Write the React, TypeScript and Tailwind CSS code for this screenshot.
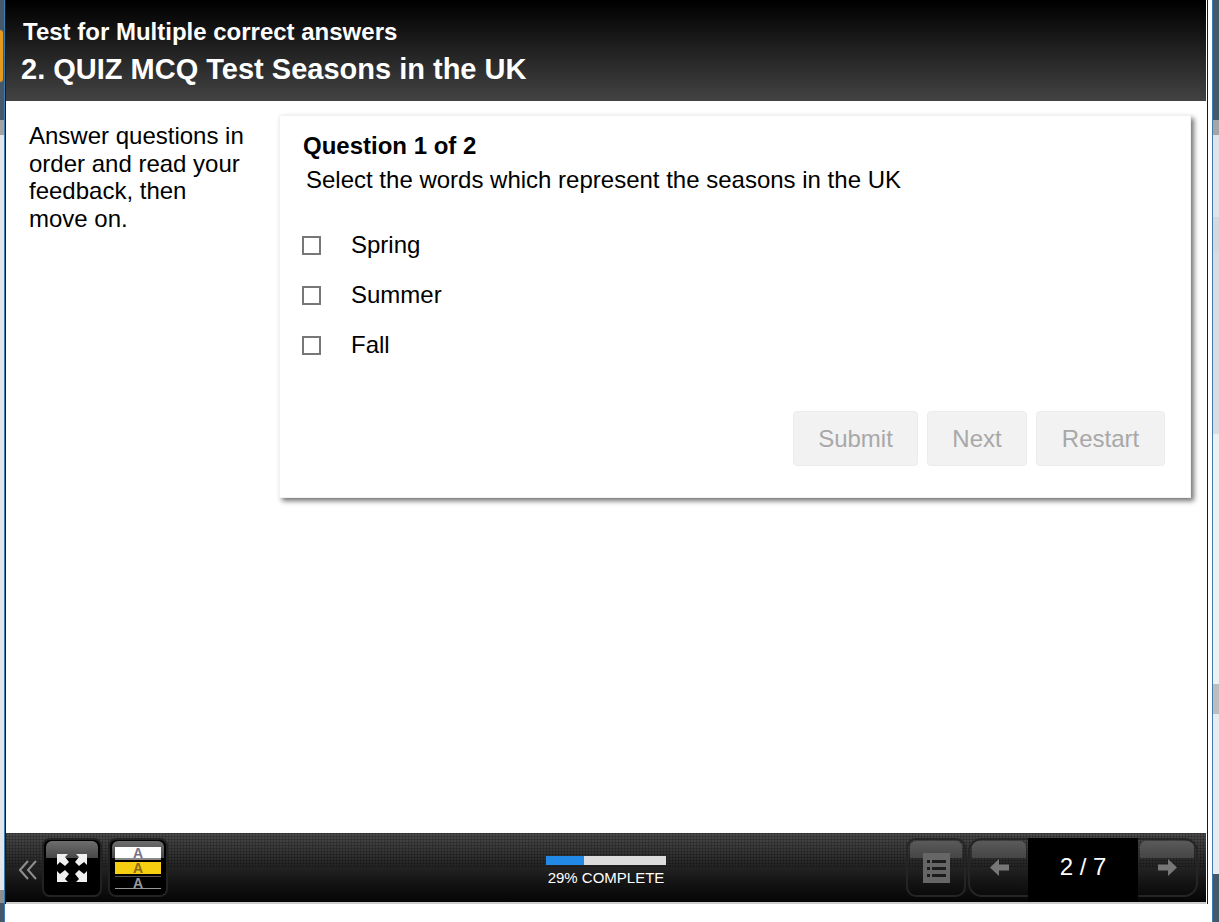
const options = ["Spring", "Summer", "Fall"];
const actions = [
  { label: "Submit", width: "w-[125px]" },
  { label: "Next", width: "w-[100px]" },
  { label: "Restart", width: "w-[129px]" },
];

function LeftStrip() {
  return (
    <div className="flex h-full w-[5px] shrink-0 flex-col border-r border-[#3d7cb0]">
      <div className="flex h-[120px] items-start bg-[#46596a]">
        <div className="mt-[30px] h-[52px] w-[3px] rounded-r-full bg-[#e39a1e]" />
      </div>
      <div className="h-[15px] bg-[#a3a3a3]" />
      <div className="h-[755px] bg-[#e2e5e9]" />
      <div className="h-[13px] bg-[#8f8f8f]" />
      <div className="flex-1 bg-[#44586a]" />
    </div>
  );
}

function RightStrip() {
  return (
    <div className="flex h-full w-[7px] shrink-0 flex-col border-l border-[#3d7cb0]">
      <div className="h-[120px] bg-[#44586a]" />
      <div className="h-[15px] bg-[#a5a5a5]" />
      <div className="h-[82px] bg-[#e0e3e8]" />
      <div className="h-[35px] bg-[#d5d8dc]" />
      <div className="h-[182px] bg-[#d9dce0]" />
      <div className="h-[250px] bg-[#eef0f2]" />
      <div className="h-[30px] bg-[#bdbdbd]" />
      <div className="h-[160px] bg-[#e9ebee]" />
      <div className="flex-1 bg-[#44586a]" />
    </div>
  );
}

function ToolButton({ className, dim, children }: { className: string; dim?: boolean; children: React.ReactNode }) {
  const shine = dim ? "bg-[linear-gradient(#5a5a5a,#454545)]" : "bg-[linear-gradient(#6e6e6e,#474747)]";
  return (
    <div className={`relative h-[59px] shrink-0 overflow-hidden border-2 ${className}`}>
      <div className={`absolute inset-x-[2px] top-[1px] h-[17px] rounded-t-[6px] ${shine}`} />
      <div className="relative flex h-full items-center justify-center">{children}</div>
    </div>
  );
}

function CollapseIcon() {
  return (
    <svg width="18" height="20" viewBox="0 0 18 20" fill="none" stroke="#8f8f8f" strokeWidth="2">
      <path d="M9 1 1 10l8 9" />
      <path d="M17 1 9 10l8 9" />
    </svg>
  );
}

function ExpandIcon() {
  return (
    <svg width="30" height="28" viewBox="0 0 30 28" fill="#f0f0f0">
      <path d="M0 0h11L8 3l4 5-4 4-5-4-3 3z" />
      <path d="M30 0H19l3 3-4 5 4 4 5-4 3 3z" />
      <path d="M0 28h11l-3-3 4-5-4-4-5 4-3-3z" />
      <path d="M30 28H19l3-3-4-5 4-4 5 4 3-3z" />
    </svg>
  );
}

function ContrastIcon() {
  const letter = "text-[14px] font-bold leading-[12px]";
  return (
    <div className="flex w-[46px] flex-col">
      <div className="flex h-[13px] justify-center border-b-2 border-[#888] bg-white">
        <span className={`${letter} text-[#77738a]`}>A</span>
      </div>
      <div className="mt-[2px] flex h-[12px] justify-center bg-[#f6cf10]">
        <span className={`${letter} text-[#8a6a18]`}>A</span>
      </div>
      <div className="mt-[2px] flex h-[13px] justify-center border-y border-t-[#555] border-b-[#999] bg-black">
        <span className={`${letter} text-[#9a9a9a]`}>A</span>
      </div>
    </div>
  );
}

function ListIcon() {
  return (
    <svg width="27" height="30" viewBox="0 0 27 30">
      <rect width="27" height="30" fill="#666" />
      <g fill="#1c1c1c">
        <rect x="4" y="7" width="3" height="3" />
        <rect x="9" y="7" width="14" height="3" />
        <rect x="4" y="14" width="3" height="3" />
        <rect x="9" y="14" width="14" height="3" />
        <rect x="4" y="21" width="3" height="3" />
        <rect x="9" y="21" width="14" height="3" />
      </g>
    </svg>
  );
}

function ArrowIcon({ flip }: { flip?: boolean }) {
  return (
    <svg width="19" height="17" viewBox="0 0 19 17" fill="#777" className={flip ? "rotate-180" : ""}>
      <path d="M9 0v5.5h10v6H9V17L0 8.5z" />
    </svg>
  );
}

function BottomBar() {
  return (
    <div className="relative flex h-[71px] shrink-0 border-b-2 border-[#ccc] bg-[linear-gradient(#4a4a4a,#262626_45%,#151515_70%,#050505)]">
      <div className="absolute inset-x-0 top-0 h-[34px] bg-[repeating-linear-gradient(90deg,rgba(0,0,0,0.2)_0_1px,transparent_1px_3px),repeating-linear-gradient(0deg,rgba(0,0,0,0.2)_0_1px,transparent_1px_3px)]" />
      <div className="relative flex flex-1 items-start pr-[8px] pt-[5px]">
        <div className="ml-[13px] mr-[5px] mt-[22px] w-[18px]">
          <CollapseIcon />
        </div>
        <ToolButton className="w-[60px] rounded-[8px] border-[#222] bg-black">
          <ExpandIcon />
        </ToolButton>
        <ToolButton className="ml-[6px] w-[60px] rounded-[8px] border-[#222] bg-black">
          <ContrastIcon />
        </ToolButton>
      </div>
      <div className="relative flex w-[120px] shrink-0 flex-col items-center pt-[23px]">
        <div className="flex h-[9px] w-full bg-[#dcdcdc]">
          <div className="h-full w-[38px] bg-[#2289e6]" />
        </div>
        <span className="mt-[3px] whitespace-nowrap text-[15px] leading-[20px] text-white">29% COMPLETE</span>
      </div>
      <div className="relative flex flex-1 items-start justify-end pr-[8px] pt-[5px]">
        <ToolButton dim className="mr-[2px] w-[60px] rounded-[10px] border-[#252525]">
          <ListIcon />
        </ToolButton>
        <ToolButton dim className="w-[60px] rounded-l-[14px] border-r-0 border-[#252525]">
          <ArrowIcon />
        </ToolButton>
        <div className="flex h-[64px] w-[110px] shrink-0 items-center justify-center bg-black pb-[6px] text-[24px] text-white">
          2 / 7
        </div>
        <ToolButton dim className="w-[60px] rounded-r-[14px] border-l-0 border-[#252525]">
          <ArrowIcon flip />
        </ToolButton>
      </div>
    </div>
  );
}

export default function App() {
  return (
    <div className="flex h-[922px] w-[1219px] overflow-hidden bg-white font-['Liberation_Sans',sans-serif] text-black">
      <LeftStrip />
      <div className="h-[904px] w-[1203px] shrink-0 border-x border-[#0d1a33] pr-[1px]">
        <div className="flex h-full flex-col border-t border-black bg-white">
          <header className="flex h-[100px] shrink-0 flex-col bg-[linear-gradient(#000,#434343)] pl-[15px] pt-[15px] font-bold text-white">
            <div className="pl-[2px] text-[24px] leading-[32px]">Test for Multiple correct answers</div>
            <div className="mt-[4px] text-[29px] leading-[34px]">2. QUIZ MCQ Test Seasons in the UK</div>
          </header>
          <main className="flex min-h-0 flex-1 items-start">
            <p className="ml-[23px] mt-[21px] w-[220px] shrink-0 text-[24px] leading-[27.5px]">
              Answer questions in order and read your feedback, then move on.
            </p>
            <section className="ml-[30px] mt-[14px] flex h-[383px] w-[912px] shrink-0 flex-col border border-[#f2f2f2] bg-white pl-[22px] pr-[25px] pt-[14px] shadow-[3px_3px_5px_rgba(0,0,0,0.55)]">
              <h2 className="ml-[1px] text-[24px] font-bold leading-[32px]">Question 1 of 2</h2>
              <p className="ml-[4px] mt-[2px] text-[24px] leading-[32px]">
                Select the words which represent the seasons in the UK
              </p>
              <ul className="mt-[34px] flex flex-col gap-[20px]">
                {options.map((option) => (
                  <li key={option} className="flex h-[30px] items-center">
                    <span className="size-[19px] shrink-0 border-2 border-[#777] bg-white" />
                    <span className="ml-[30px] text-[24px] leading-[30px]">{option}</span>
                  </li>
                ))}
              </ul>
              <div className="mt-[51px] flex justify-end gap-[9px]">
                {actions.map((action) => (
                  <div
                    key={action.label}
                    className={`flex h-[55px] items-center justify-center rounded-[4px] border border-[#ececec] bg-[#f2f2f2] text-[24px] text-[#a8a8a8] ${action.width}`}
                  >
                    {action.label}
                  </div>
                ))}
              </div>
            </section>
          </main>
          <BottomBar />
        </div>
      </div>
      <div className="w-[4px] shrink-0 bg-white" />
      <RightStrip />
    </div>
  );
}
